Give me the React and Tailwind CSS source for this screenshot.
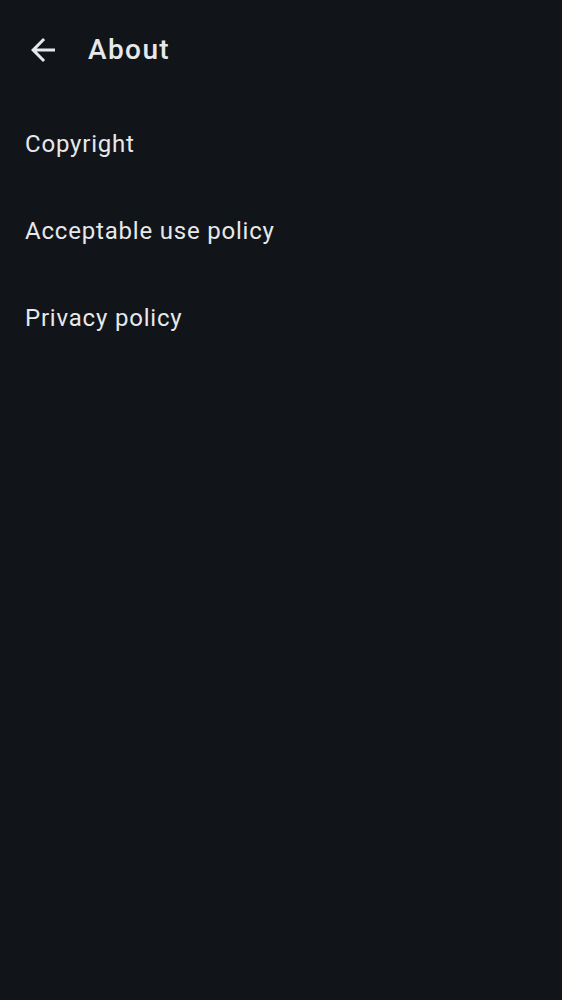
export default function App() {
    const items = ["Copyright", "Acceptable use policy", "Privacy policy"];
    return (
        <div className="min-h-screen bg-[#111418] text-[#e6e8eb]" style={{ fontFamily: "Roboto, sans-serif" }}>
            <div className="flex h-[100px] items-center px-[25px]">
                <svg width="36" height="36" viewBox="0 0 24 24" fill="currentColor" className="mr-[27px]">
                    <path d="M20 11H7.83l5.59-5.59L12 4l-8 8 8 8 1.41-1.41L7.83 13H20v-2z" />
                </svg>
                <h1 className="text-[28px] font-medium tracking-[1.4px]">About</h1>
            </div>
            <ul>
                {items.map((t) => (
                    <li key={t} className="flex h-[87px] items-center px-[25px] text-[24px] tracking-[0.8px]">
                        {t}
                    </li>
                ))}
            </ul>
        </div>
    );
}
